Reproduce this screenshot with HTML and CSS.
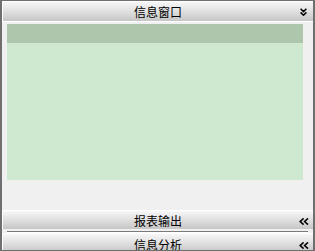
FILE: index.html
```html
<!DOCTYPE html>
<html>
<head>
<meta charset="utf-8">
<link rel="stylesheet" href="styles.css">
</head>
<body>
<div class="win">
  <div class="hdr h1">
    <span class="title">信息窗口</span>
    <svg class="ico down" width="7" height="8" viewBox="0 0 7 8"><path d="M0.6 0.8 L3.5 3.6 L6.4 0.8 M0.6 4.4 L3.5 7.2 L6.4 4.4" fill="none" stroke="#000" stroke-width="1.5"/></svg>
  </div>
  <div class="pane">
    <div class="green">
      <div class="band"></div>
    </div>
  </div>
  <div class="hdr h2">
    <span class="title">报表输出</span>
    <svg class="ico left" width="10" height="7" viewBox="0 0 10 7"><path d="M4.6 0.4 L1.2 3.5 L4.6 6.6 M9 0.4 L5.6 3.5 L9 6.6" fill="none" stroke="#000" stroke-width="1.6"/></svg>
  </div>
  <div class="sep"></div>
  <div class="hdr h3">
    <span class="title">信息分析</span>
    <svg class="ico left" width="10" height="7" viewBox="0 0 10 7"><path d="M4.6 0.4 L1.2 3.5 L4.6 6.6 M9 0.4 L5.6 3.5 L9 6.6" fill="none" stroke="#000" stroke-width="1.6"/></svg>
  </div>
</div>
</body>
</html>
```
FILE: styles.css
```css
html, body { margin: 0; padding: 0; background: #f0f0f0; }
.win {
  width: 315px;
  height: 251px;
  box-sizing: border-box;
  border-top: 1px solid #6f6f6f;
  border-left: 2px solid #6f6f6f;
  border-right: 2px solid #6f6f6f;
  border-bottom: 1px solid #6f6f6f;
  background: #f0f0f0;
  overflow: hidden;
  display: flex;
  flex-direction: column;
  font-family: "Noto Sans CJK SC", "Noto Sans", sans-serif;
  font-size: 12px;
  color: #000;
}
.hdr {
  position: relative;
  flex: none;
  height: 20px;
  box-sizing: border-box;
  background: linear-gradient(#f7f7f7, #e2e2e2 45%, #c6c6c6);
  border-top: 1px solid #ffffff;
  border-left: 1px solid #ffffff;
  display: flex;
  align-items: center;
  justify-content: center;
}
.h1 { height: 20px; }
.h2 { height: 19px; }
.h3 { height: 19px; }
.title { line-height: 12px; }
.h2 .title { margin-top: 2px; }
.h3 .title { margin-top: 4px; }
.ico { position: absolute; }
.down { right: 6px; top: 6px; }
.h2 .left { right: 4px; top: 7px; }
.h3 .left { right: 4px; top: 8px; }
.pane {
  flex: none;
  height: 189px;
  box-sizing: border-box;
  border-top: 1px solid #ffffff;
  padding: 2px 0 0 5px;
  background: #f0f0f0;
}
.green {
  width: 296px;
  height: 156px;
  background: #cfe8d0;
}
.band {
  height: 19px;
  background: #adc6ac;
}
.sep {
  flex: none;
  height: 4px;
  box-sizing: border-box;
  margin: 0 5px 0 5px;
  border-bottom: 1px solid #ffffff;
  position: relative;
}
.sep::after {
  content: "";
  position: absolute;
  left: 0; right: 0; top: 2px;
  height: 1px;
  background: #7a7a7a;
}
```
